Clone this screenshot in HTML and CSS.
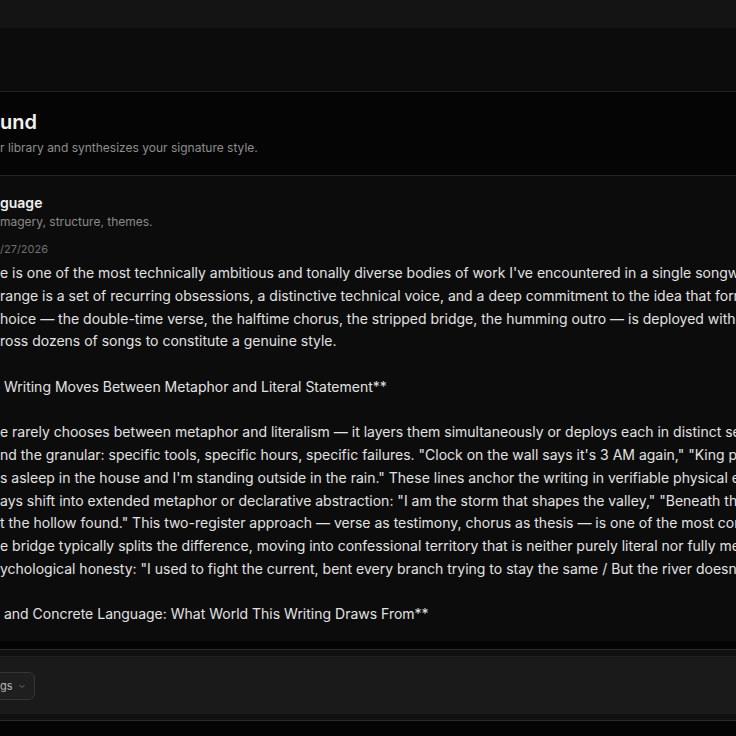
FILE: index.html
```html
<!DOCTYPE html>
<html>
<head>
    <meta charset="UTF-8">
    <meta name="viewport" content="width=device-width, initial-scale=1.0">
    <title>Your Sound</title>
    <link rel="stylesheet" href="styles.css">
</head>
<body>
<!-- App chrome -->
<div class="topbar"></div>
<div class="toolbar"></div>

<!-- Page heading -->
<div class="hero">
    <h1>und</h1>
    <p>r library and synthesizes your signature style.</p>
</div>


<div class="content">
    <h2>guage</h2>
    <p class="section-sub">magery, structure, themes.</p>
    <div class="stamp">/27/2026</div>
    <div class="report">e is one of the most technically ambitious and tonally diverse bodies of work I've encountered in a single songwriter's catalogue.
range is a set of recurring obsessions, a distinctive technical voice, and a deep commitment to the idea that form carries meaning.
hoice — the double-time verse, the halftime chorus, the stripped bridge, the humming outro — is deployed with intent and repeated
ross dozens of songs to constitute a genuine style.

 Writing Moves Between Metaphor and Literal Statement**

e rarely chooses between metaphor and literalism — it layers them simultaneously or deploys each in distinct sections of a song.
nd the granular: specific tools, specific hours, specific failures. "Clock on the wall says it's 3 AM again," "King pawn to e4 again,"
s asleep in the house and I'm standing outside in the rain." These lines anchor the writing in verifiable physical experience.
ays shift into extended metaphor or declarative abstraction: "I am the storm that shapes the valley," "Beneath the weight of what we lost
t the hollow found." This two-register approach — verse as testimony, chorus as thesis — is one of the most consistent moves here.
e bridge typically splits the difference, moving into confessional territory that is neither purely literal nor fully metaphorical,
ychological honesty: "I used to fight the current, bent every branch trying to stay the same / But the river doesn't ask permission"

 and Concrete Language: What World This Writing Draws From**</div>
</div>

<!-- Bottom controls -->
<div class="gap"></div>
<div class="composer">
    <div class="composer-bar">
        <button class="select">gs <span class="chev">
            <svg width="8" height="8" viewBox="0 0 8 8"><path d="M1.5 3 L4 5.5 L6.5 3" fill="none" stroke="currentColor" stroke-width="1"/></svg>
        </span></button>
    </div>
</div>
</body>
</html>
```

FILE: styles.css
```css
/* Dark app shell, no page scrolling */
html, body {
    margin: 0;
    height: 100%;
    overflow: hidden;
}

body {
    background-color: #040404;
    font-family: Inter, "Noto Sans", sans-serif;
    color: #e4e4e4;
}

.topbar {
    height: 28px;
    background-color: #141414;
}

.toolbar {
    height: 63px;
    background-color: #0c0c0c;
    border-bottom: 1px solid #2a2020;
}

/* Heading block */
.hero {
    height: 84px;
    box-sizing: border-box;
    padding-top: 16px;
    background-color: #050505;
    border-bottom: 1px solid #2a2020;
}

.hero h1 {
    margin: 0;
    font-size: 20px;
    line-height: 28px;
    font-weight: 600;
    color: #f2f2f2;
}

.hero p {
    margin: 3px 0 0;
    font-size: 12px;
    line-height: 18px;
    color: #8e8e8e;
}

/* Report area */
.content {
    height: 465px;
    box-sizing: border-box;
    padding-top: 17px;
    overflow: hidden;
    background-color: #0c0c0c;
}

.content h2 {
    margin: 0;
    font-size: 14px;
    line-height: 20px;
    font-weight: 600;
    color: #f0f0f0;
}

.section-sub {
    margin: 0;
    font-size: 12px;
    line-height: 18px;
    color: #8a8a8a;
}

.stamp {
    margin-top: 10px;
    font-size: 11px;
    line-height: 16px;
    color: #6f6f6f;
}

.report {
    margin-top: 5px;
    font-size: 14px;
    line-height: 1.625;
    white-space: pre;
    color: #e2e2e2;
}

/* Composer strip at the bottom */
.gap {
    height: 8px;
    background-color: #040404;
}

.composer {
    background-color: #111111;
    border-top: 1px solid #2c2c2c;
    border-bottom: 1px solid #2a2a2a;
    padding: 6px 0 6px;
}

.composer-bar {
    height: 58px;
    box-sizing: border-box;
    border-top: 1px solid #202020;
    background-color: #1a1a1a;
    display: flex;
    align-items: center;
}

.select {
    margin-left: -11px;
    height: 28px;
    padding: 0 8px 0 10px;
    display: flex;
    align-items: center;
    gap: 5px;
    background-color: #1f1f1f;
    border: 1px solid #353535;
    border-radius: 6px;
    color: #b5b5b5;
    font-family: Inter, sans-serif;
    font-size: 11px;
}

.chev {
    display: flex;
    color: #6a6a6a;
}
```
